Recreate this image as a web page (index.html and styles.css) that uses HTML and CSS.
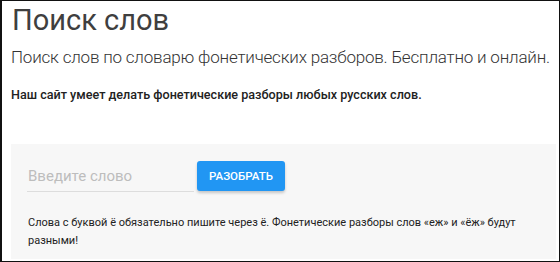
FILE: index.html
```html
<!DOCTYPE html>
<html lang="ru">
<head>
<meta charset="utf-8">
<link rel="stylesheet" href="styles.css">
</head>
<body>
<div class="frame">
  <h1 class="title">Поиск слов</h1>
  <p class="subtitle">Поиск слов по словарю фонетических разборов. Бесплатно и онлайн.</p>
  <p class="lead">Наш сайт умеет делать фонетические разборы любых русских слов.</p>
  <div class="panel">
    <div class="form">
      <div class="field"><span class="placeholder">Введите слово</span></div>
      <button class="btn">РАЗОБРАТЬ</button>
    </div>
    <p class="note">Слова с буквой ё обязательно пишите через ё. Фонетические разборы слов «еж» и «ёж» будут разными!</p>
  </div>
</div>
</body>
</html>
```

FILE: styles.css
```css
html, body { margin: 0; padding: 0; background: #fff; }
.frame {
  width: 560px; height: 262px; box-sizing: border-box;
  border: 1px solid #111; border-left-width: 2px;
  padding: 0 3px 2px 9px;
  font-family: Roboto, "Noto Sans", sans-serif;
  display: flex; flex-direction: column;
}
.title {
  margin: 2px 0 0 1px; font-size: 29px; font-weight: 400; color: #3f3f3f; line-height: 34px;
}
.subtitle {
  margin: 9px 0 0 0; font-size: 17px; font-weight: 300; color: #333; line-height: 22px;
  letter-spacing: -0.2px; white-space: nowrap;
}
.lead {
  margin: 19px 0 0 0; font-size: 12.6px; font-weight: 500; color: #222; line-height: 16px;
}
.panel {
  margin-top: 41px; flex: 1; background: #f7f7f7;
  padding: 17px 16px 0 16px;
}
.form { display: flex; align-items: flex-end; gap: 3px; }
.field {
  width: 166px; border-bottom: 1px solid #ddd; padding: 0 0 5px 1px;
}
.placeholder { font-size: 15px; color: #bdbdbd; line-height: 20px; }
.btn {
  width: 88px; height: 30px; margin-bottom: 1px;
  background: #2196f3; color: #fff; border: none; border-radius: 3px;
  font-family: Roboto, sans-serif; font-size: 11.5px; font-weight: 500;
  box-shadow: 0 2px 3px rgba(0,0,0,0.2);
  padding: 0;
}
.note {
  margin: 22px 0 0 1px; font-size: 11px; color: #222; line-height: 18px; width: 500px;
}
```
